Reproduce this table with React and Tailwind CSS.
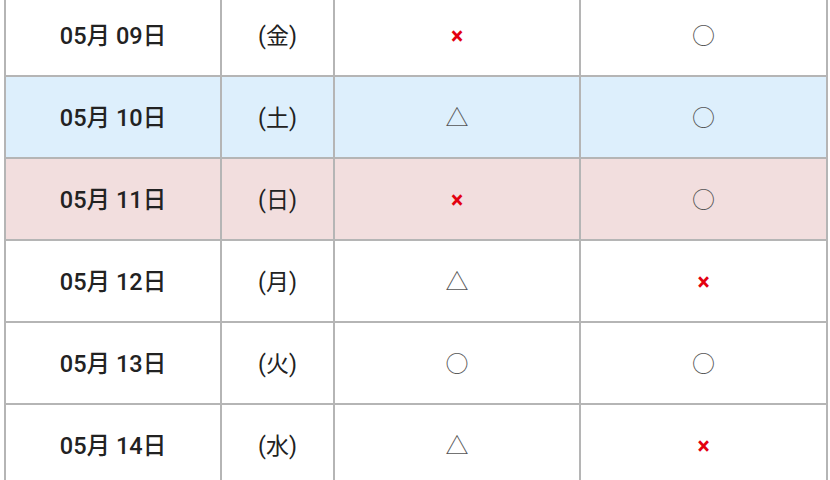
const rows = [
  { date: "05月 09日", day: "(金)", a: "x", b: "o", bg: "bg-white" },
  { date: "05月 10日", day: "(土)", a: "t", b: "o", bg: "bg-[#ddeffc]" },
  { date: "05月 11日", day: "(日)", a: "x", b: "o", bg: "bg-[#f2dede]" },
  { date: "05月 12日", day: "(月)", a: "t", b: "x", bg: "bg-white" },
  { date: "05月 13日", day: "(火)", a: "o", b: "o", bg: "bg-white" },
  { date: "05月 14日", day: "(水)", a: "t", b: "x", bg: "bg-white" },
];

function Mark({ type }) {
  if (type === "x") {
    return <span className="text-[#e3000f] font-bold text-[23px]">×</span>;
  }
  if (type === "t") {
    return <span className="text-[#555] text-[23px]">△</span>;
  }
  return <span className="text-[#555] text-[23px]">○</span>;
}

export default function App() {
  return (
    <div
      className="w-[830px] h-[480px] overflow-hidden bg-white px-[4px]"
      style={{ fontFamily: "Roboto, 'Noto Sans CJK JP', sans-serif" }}
    >
      <table className="-mt-[7px] w-[822px] border-collapse table-fixed text-[#222]">
        <colgroup>
          <col className="w-[216px]" />
          <col className="w-[113px]" />
          <col className="w-[246px]" />
          <col className="w-[247px]" />
        </colgroup>
        <tbody>
          {rows.map((r) => (
            <tr key={r.date} className={`${r.bg} h-[82px]`}>
              <td className="border-2 border-[#b5b5b5] pt-[4px] text-center text-[23.5px] font-medium">
                {r.date}
              </td>
              <td className="border-2 border-[#b5b5b5] pt-[4px] text-center text-[23px]">
                {r.day}
              </td>
              <td className="border-2 border-[#b5b5b5] pt-[4px] text-center">
                <Mark type={r.a} />
              </td>
              <td className="border-2 border-[#b5b5b5] pt-[4px] text-center">
                <Mark type={r.b} />
              </td>
            </tr>
          ))}
        </tbody>
      </table>
    </div>
  );
}
